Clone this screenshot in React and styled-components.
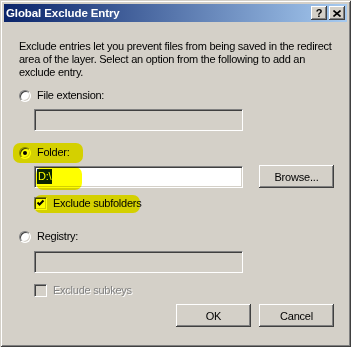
import styled, { createGlobalStyle } from "styled-components";

const GlobalStyle = createGlobalStyle`
    body {
        margin: 0;
        background: #d4d0c8;
        font-family: "Liberation Sans", Arial, sans-serif;
        font-size: 11px;
    }
`;

const Window = styled.div`
    width: 351px;
    height: 347px;
    box-sizing: border-box;
    background: #d4d0c8;
    padding: 4px;
    display: flex;
    flex-direction: column;
    box-shadow: inset 1px 1px #d4d0c8, inset -1px -1px #404040,
        inset 2px 2px #fff, inset -2px -2px #808080;
`;

const TitleBar = styled.div`
    height: 18px;
    display: flex;
    align-items: center;
    justify-content: space-between;
    padding: 0 2px 0 2px;
    background: linear-gradient(to right, #0a246a, #a6caf0);
`;

const Title = styled.span`
    color: #fff;
    font-weight: bold;
    font-size: 11.5px;
    letter-spacing: -0.1px;
`;

const CaptionButtons = styled.div`
    display: flex;
    gap: 2px;
`;

const CaptionButton = styled.div`
    width: 16px;
    height: 14px;
    box-sizing: border-box;
    background: #d4d0c8;
    display: flex;
    align-items: center;
    justify-content: center;
    font-weight: bold;
    font-size: 11px;
    color: #000;
    box-shadow: inset -1px -1px #404040, inset 1px 1px #fff,
        inset -2px -2px #808080, inset 2px 2px #d4d0c8;
`;

const Body = styled.div`
    padding: 18px 10px 0 15px;
    display: flex;
    flex-direction: column;
    letter-spacing: -0.25px;
`;

const Intro = styled.p`
    margin: 0;
    line-height: 13px;
    color: #000;
`;

const Row = styled.div`
    position: relative;
    display: flex;
    align-items: center;
    gap: ${p => p.gap || 0}px;
    margin-top: ${p => p.top || 0}px;
    margin-left: ${p => p.indent || 0}px;
    height: ${p => p.h || 13}px;
`;

const RadioCircle = styled.span`
    width: 12px;
    height: 12px;
    box-sizing: border-box;
    border-radius: 50%;
    border: 1px solid;
    border-color: #808080 #fff #fff #808080;
    background: #fff;
    box-shadow: inset 1px 1px #404040, inset -1px -1px #d4d0c8;
    display: flex;
    align-items: center;
    justify-content: center;
    &::after {
        content: "";
        width: 4px;
        height: 4px;
        border-radius: 50%;
        background: #000;
        display: ${p => (p.checked ? "block" : "none")};
    }
`;

const Label = styled.span`
    line-height: 13px;
    color: ${p => (p.disabled ? "#808080" : "#000")};
    text-shadow: ${p => (p.disabled ? "1px 1px #fff" : "none")};
`;

const CheckBox = styled.span`
    width: 13px;
    height: 13px;
    box-sizing: border-box;
    border: 1px solid;
    border-color: #808080 #fff #fff #808080;
    box-shadow: inset 1px 1px #404040, inset -1px -1px #d4d0c8;
    background: ${p => (p.disabled ? "#d4d0c8" : "#fff")};
    display: flex;
    align-items: center;
    justify-content: center;
`;

const Field = styled.div`
    width: 209px;
    height: 22px;
    box-sizing: border-box;
    border: 1px solid;
    border-color: #808080 #fff #fff #808080;
    box-shadow: inset 1px 1px #404040, inset -1px -1px #d4d0c8;
    background: ${p => (p.disabled ? "#d4d0c8" : "#fff")};
    padding: 2px 2px;
    display: flex;
    align-items: center;
`;

const Selected = styled.span`
    background: #0a246a;
    color: #fff;
    line-height: 15px;
    padding: 0 1px;
`;

const Button = styled.button`
    width: 75px;
    height: 23px;
    padding: 0;
    border: none;
    background: #d4d0c8;
    color: #000;
    font-family: "Liberation Sans", Arial, sans-serif;
    font-size: 11px;
    letter-spacing: -0.2px;
    box-shadow: inset -1px -1px #404040, inset 1px 1px #fff,
        inset -2px -2px #808080, inset 2px 2px #d4d0c8;
`;

const Footer = styled.div`
    display: flex;
    justify-content: flex-end;
    gap: 8px;
    margin-top: 7px;
    padding-right: 3px;
`;

const Marker = styled.span`
    position: absolute;
    left: ${p => p.x}px;
    top: ${p => p.y}px;
    width: ${p => p.w}px;
    height: ${p => p.h}px;
    background: #ffff00;
    mix-blend-mode: multiply;
    border-radius: 7px;
    pointer-events: none;
`;

function CheckMark() {
    return (
        <svg width="9" height="9" viewBox="0 0 9 9">
            <polyline points="1.5,3.5 3.5,5.5 7.5,1.5" fill="none" stroke="#000" strokeWidth="2" />
        </svg>
    );
}

function CloseGlyph() {
    return (
        <svg width="8" height="7" viewBox="0 0 8 7">
            <path d="M0.5 0.5 L7.5 6.5 M7.5 0.5 L0.5 6.5" stroke="#000" strokeWidth="1.6" />
        </svg>
    );
}

export default function App() {
    return (
        <>
            <GlobalStyle />
            <Window>
                <TitleBar>
                    <Title>Global Exclude Entry</Title>
                    <CaptionButtons>
                        <CaptionButton>?</CaptionButton>
                        <CaptionButton><CloseGlyph /></CaptionButton>
                    </CaptionButtons>
                </TitleBar>
                <Body>
                    <Intro>
                        Exclude entries let you prevent files from being saved in the redirect
                        area of the layer. Select an option from the following to add an
                        exclude entry.
                    </Intro>

                    <Row top={10} gap={6}>
                        <RadioCircle />
                        <Label>File extension:</Label>
                    </Row>
                    <Row top={7} indent={15} h={22}>
                        <Field disabled />
                    </Row>

                    <Row top={15} gap={6}>
                        <RadioCircle checked />
                        <Label>Folder:</Label>
                        <Marker x={-6} y={-3} w={70} h={20} />
                    </Row>
                    <Row top={6} indent={15} h={23} gap={16}>
                        <Field>
                            <Selected>D:\</Selected>
                        </Field>
                        <Button>Browse...</Button>
                        <Marker x={2} y={2} w={46} h={23} />
                    </Row>
                    <Row top={9} indent={15} gap={6}>
                        <CheckBox><CheckMark /></CheckBox>
                        <Label>Exclude subfolders</Label>
                        <Marker x={0} y={-2} w={106} h={18} />
                    </Row>

                    <Row top={20} gap={6}>
                        <RadioCircle />
                        <Label>Registry:</Label>
                    </Row>
                    <Row top={8} indent={15} h={22}>
                        <Field disabled />
                    </Row>
                    <Row top={11} indent={15} gap={6}>
                        <CheckBox disabled />
                        <Label disabled>Exclude subkeys</Label>
                    </Row>

                    <Footer>
                        <Button>OK</Button>
                        <Button>Cancel</Button>
                    </Footer>
                </Body>
            </Window>
        </>
    );
}
